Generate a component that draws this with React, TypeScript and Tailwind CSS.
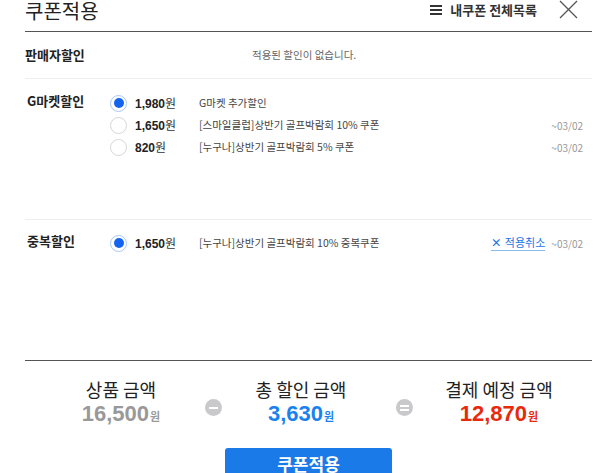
import React from "react";

const font = { fontFamily: '"Noto Sans CJK KR", "Noto Sans", sans-serif' };

const Radio = ({ checked }: { checked?: boolean }) =>
  checked ? (
    <span className="flex h-[17px] w-[17px] items-center justify-center rounded-full border border-[#a9c9f5] bg-white">
      <span className="h-[10px] w-[10px] rounded-full bg-[#1464f0]" />
    </span>
  ) : (
    <span className="h-[17px] w-[17px] rounded-full border border-[#d6d6d6] bg-white" />
  );

type Row = { checked?: boolean; amount: string; desc: string; date?: string; cancel?: boolean };

const CouponRow = ({ row }: { row: Row }) => (
  <div className="flex h-[22px] items-center">
    <div className="ml-[85px] flex w-[87px] items-center">
      <Radio checked={row.checked} />
      <span className="ml-[8px] text-[12px] font-bold text-[#222] [font-family:'Liberation_Sans',sans-serif]">
        {row.amount}
        <span className="text-[12px] font-normal text-[#333]" style={font}>원</span>
      </span>
    </div>
    <span className="ml-[2px] flex-1 text-[10.5px] text-[#444]">{row.desc}</span>
    {row.cancel && (
      <span className="mr-[6px] flex items-center gap-[3px] border-b border-[#8ab8f0] pb-[1px] text-[11px] leading-[13px] text-[#1a73e8]">
        <span className="text-[11px] font-bold">×</span>적용취소
      </span>
    )}
    {row.date && <span className="mr-[9px] text-[10px] text-[#999]">{row.date}</span>}
  </div>
);

const Circle = ({ kind }: { kind: "minus" | "equal" }) => (
  <span className="flex h-[17px] w-[17px] flex-col items-center justify-center gap-[2px] rounded-full bg-[#c9c9cc]">
    <span className="h-[2px] w-[9px] bg-white" />
    {kind === "equal" && <span className="h-[2px] w-[9px] bg-white" />}
  </span>
);

const Sum = ({ label, value, color, w }: { label: string; value: string; color: string; w: string }) => (
  <div className={`flex flex-col items-center ${w}`}>
    <div className="text-[18px] leading-[24px] text-[#222]">{label}</div>
    <div className={`mt-[1px] flex items-baseline font-bold ${color}`}>
      <span className="text-[22px] leading-[24px] [font-family:'Liberation_Sans',sans-serif]">{value}</span>
      <span className="ml-[1px] text-[11px]">원</span>
    </div>
  </div>
);

export default function App() {
  return (
    <div className="h-[473px] w-[600px] overflow-hidden bg-white" style={font}>
      <div className="ml-[25px] mr-[8px]">
        {/* header */}
        <div className="flex h-[32px] items-start border-b border-[#555]">
          <h1 className="mt-0 text-[20px] leading-[22px] text-[#222]">쿠폰적용</h1>
          <div className="ml-auto mt-[1px] flex items-center">
            <span className="flex flex-col gap-[2px]">
              <span className="h-[2px] w-[12px] bg-[#333]" />
              <span className="h-[2px] w-[12px] bg-[#333]" />
              <span className="h-[2px] w-[12px] bg-[#333]" />
            </span>
            <span className="ml-[8px] text-[13px] font-semibold leading-[18px] text-[#333]">내쿠폰 전체목록</span>
            <svg className="ml-[22px] mt-[-1px]" width="19" height="19" viewBox="0 0 19 19">
              <path d="M1 1 L18 18 M18 1 L1 18" stroke="#555" strokeWidth="1.3" />
            </svg>
            <span className="w-[14px]" />
          </div>
        </div>

        {/* seller */}
        <div className="flex h-[47px] items-center border-b border-[#eee]">
          <span className="w-[227px] text-[13px] font-bold text-[#222]">판매자할인</span>
          <span className="text-[10.5px] text-[#666]">적용된 할인이 없습니다.</span>
        </div>

        {/* gmarket */}
        <div className="relative h-[141px] border-b border-[#eee] pt-[13px]">
          <span className="absolute left-[2px] top-[12px] text-[13px] font-bold text-[#222]">G마켓할인</span>
          <CouponRow row={{ checked: true, amount: "1,980", desc: "G마켓 추가할인" }} />
          <CouponRow row={{ amount: "1,650", desc: "[스마일클럽]상반기 골프박람회 10% 쿠폰", date: "~03/02" }} />
          <CouponRow row={{ amount: "820", desc: "[누구나]상반기 골프박람회 5% 쿠폰", date: "~03/02" }} />
        </div>

        {/* duplicate */}
        <div className="relative h-[141px] border-b border-[#555] pt-[12px]">
          <span className="absolute left-[2px] top-[11px] text-[13px] font-bold text-[#222]">중복할인</span>
          <CouponRow row={{ checked: true, amount: "1,650", desc: "[누구나]상반기 골프박람회 10% 중복쿠폰", date: "~03/02", cancel: true }} />
        </div>

        {/* summary */}
        <div className="flex items-center pt-[16px]">
          <Sum w="w-[160px] ml-[16px]" label="상품 금액" value="16,500" color="text-[#999]" />
          <span className="ml-[4px] mt-[12px]"><Circle kind="minus" /></span>
          <Sum w="w-[150px] ml-[4px]" label="총 할인 금액" value="3,630" color="text-[#1a82ee]" />
          <span className="ml-[20px] mt-[12px]"><Circle kind="equal" /></span>
          <Sum w="w-[160px] ml-[6px]" label="결제 예정 금액" value="12,870" color="text-[#e8290b]" />
        </div>

        <button className="mx-auto mt-[22px] flex h-[40px] w-[167px] justify-center rounded-[3px] bg-[#1a7be8] pt-[3px] text-[17px] font-bold text-white">
          쿠폰적용
        </button>
      </div>
    </div>
  );
}
